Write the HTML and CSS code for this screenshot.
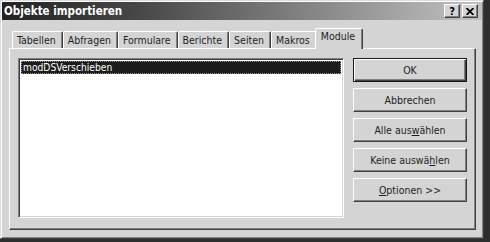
FILE: index.html
```html
<!DOCTYPE html>
<html lang="de">
<head>
    <meta charset="UTF-8">
    <title>Objekte importieren</title>
    <link rel="stylesheet" href="styles.css">
</head>
<body>
<div class="window">
    <div class="title-bar">
        <span class="title-text">Objekte importieren</span>
        <div class="title-buttons">
            <span class="caption-btn help-btn">?</span>
            <span class="caption-btn close-btn">
                <svg width="8" height="7" viewBox="0 0 8 7">
                    <path d="M0.5 0 L7.5 7 M7.5 0 L0.5 7" stroke="#000" stroke-width="1.8"/>
                </svg>
            </span>
        </div>
    </div>
    <div class="dialog-body">
        <ul class="tab-row">
            <li class="tab">Tabellen</li>
            <li class="tab">Abfragen</li>
            <li class="tab">Formulare</li>
            <li class="tab">Berichte</li>
            <li class="tab">Seiten</li>
            <li class="tab">Makros</li>
            <li class="tab selected">Module</li>
        </ul>
        <div class="tab-panel">
            <div class="list-box">
                <div class="list-item selected">modDSVerschieben</div>
            </div>
            <div class="button-col">
                <div class="btn default">OK</div>
                <div class="btn">Abbrechen</div>
                <div class="btn">Alle aus<u>w</u>ählen</div>
                <div class="btn">Keine auswä<u>h</u>len</div>
                <div class="btn"><u>O</u>ptionen &gt;&gt;</div>
            </div>
        </div>
    </div>
</div>
</body>
</html>
```

FILE: styles.css
```css
*{
    margin: 0;
    padding: 0;
    box-sizing: border-box;
}
body{
    background: #2e2e2e;
    font-family: "DejaVu Sans Condensed", "DejaVu Sans", sans-serif;
    font-size: 10.5px;
    color: #1e1e1e;
}
.window{
    width: 484px;
    height: 239px;
    background: #d4d4d4;
    border: 1px solid;
    border-color: #dcdcdc #404040 #404040 #dcdcdc;
    box-shadow: inset 1px 1px #fff, inset -1px -1px #808080;
    padding: 1px;
}
.title-bar{
    height: 18px;
    display: flex;
    align-items: center;
    justify-content: space-between;
    padding: 0 4px 0 2px;
    background: linear-gradient(to right, #222, #4a4a4a 30%, #c2c2c2);
}
.title-text{
    color: #fff;
    font-weight: bold;
    font-size: 11.5px;
}
.title-buttons{
    display: flex;
    gap: 2px;
}
.caption-btn{
    width: 16px;
    height: 14px;
    display: flex;
    align-items: center;
    justify-content: center;
    background: #d4d4d4;
    border: 1px solid;
    border-color: #fff #404040 #404040 #fff;
    box-shadow: inset -1px -1px #808080;
    font-weight: bold;
    font-size: 11px;
    color: #000;
}
.dialog-body{
    padding: 8px 6px 0 7px;
}
.tab-row{
    list-style: none;
    display: flex;
    align-items: flex-end;
    height: 20px;
    padding-left: 3px;
}
.tab{
    height: 17px;
    padding: 2px 6px 0 4px;
    line-height: 13px;
    border: 1px solid;
    border-bottom: none;
    border-color: #fff #404040 #404040 #fff;
    border-radius: 2px 2px 0 0;
    box-shadow: inset -1px 0 #808080;
    white-space: nowrap;
}
.tab.selected{
    height: 21px;
    padding: 1px 7px 0 5px;
    margin: 0 -2px;
    background: #d4d4d4;
    position: relative;
    top: 1px;
    z-index: 1;
}
.tab-panel{
    height: 182px;
    display: flex;
    gap: 9px;
    padding: 9px 7px 0 8px;
    border: 1px solid;
    border-color: #fff #404040 #404040 #fff;
    box-shadow: inset -1px -1px #808080;
}
.list-box{
    width: 326px;
    height: 160px;
    background: #fff;
    border: 1px solid;
    border-color: #808080 #fff #fff #808080;
    box-shadow: inset 1px 1px #404040, inset -1px -1px #d4d4d4;
    padding: 2px 2px;
}
.list-item{
    height: 13px;
    line-height: 11px;
    padding-left: 1px;
    font-size: 10.2px;
}
.list-item.selected{
    background: #1c1c1c;
    color: #fff;
    border: 1px dotted #9a9a9a;
}
.button-col{
    display: flex;
    flex-direction: column;
    gap: 6px;
}
.btn{
    width: 114px;
    height: 24px;
    display: flex;
    align-items: center;
    justify-content: center;
    border: 1px solid;
    border-color: #fff #404040 #404040 #fff;
    box-shadow: inset -1px -1px #808080;
}
.btn.default{
    border: 1px solid #1a1a1a;
    box-shadow: inset 1px 1px #fff, inset -1px -1px #404040, inset -2px -2px #808080;
}
```
